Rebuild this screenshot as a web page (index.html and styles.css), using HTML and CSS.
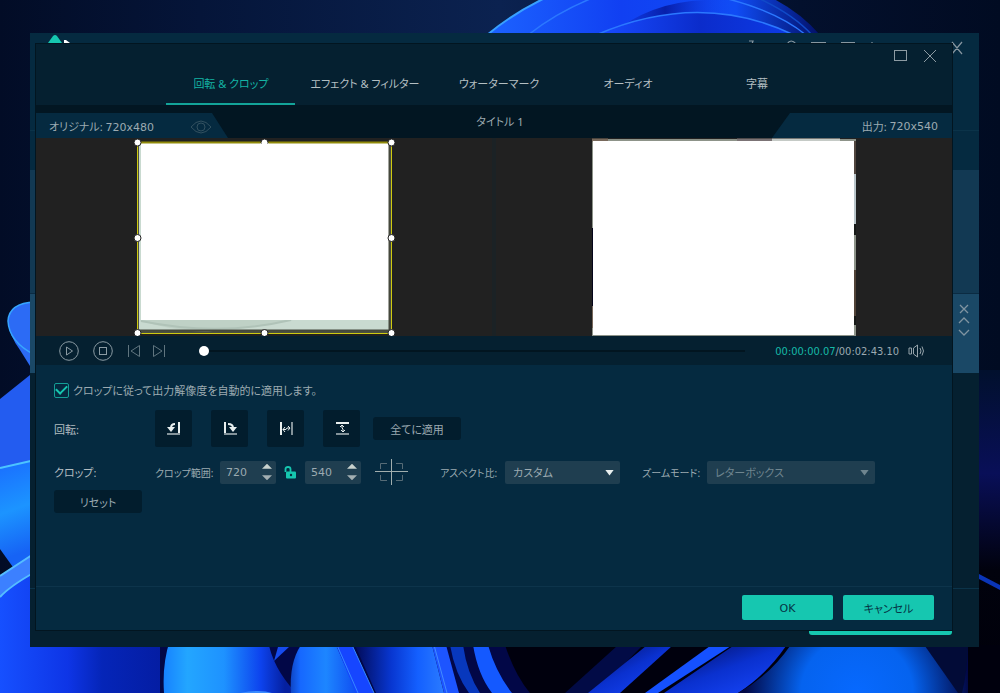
FILE: index.html
```html
<!DOCTYPE html>
<html lang="ja">
<head>
<meta charset="utf-8">
<meta name="viewport" content="width=device-width, initial-scale=1">
<title>回転 &amp; クロップ</title>
<link rel="stylesheet" href="styles.css">
</head>
<body>
<div class="desktop">
  <svg class="wallpaper" viewBox="0 0 1000 693" preserveAspectRatio="none" aria-hidden="true">
    <defs>
      <linearGradient id="sky" x1="0" x2="1" y1="0" y2="0">
        <stop offset="0" stop-color="#020c26"/><stop offset=".2" stop-color="#051539"/><stop offset=".5" stop-color="#0b2250"/><stop offset=".8" stop-color="#03102d"/><stop offset="1" stop-color="#010b22"/>
      </linearGradient>
      <linearGradient id="arc" x1="490" x2="818" y1="0" y2="0" gradientUnits="userSpaceOnUse">
        <stop offset="0" stop-color="#1c62ff"/><stop offset=".4" stop-color="#1140f2"/><stop offset=".75" stop-color="#104cf5"/><stop offset="1" stop-color="#03126b"/>
      </linearGradient>
      <linearGradient id="arcIn" x1="600" x2="800" y1="0" y2="0" gradientUnits="userSpaceOnUse">
        <stop offset="0" stop-color="#184bff"/><stop offset=".5" stop-color="#0b2ccb"/><stop offset="1" stop-color="#0d3ce8"/>
      </linearGradient>
      <linearGradient id="arcShade" x1="600" x2="730" y1="0" y2="0" gradientUnits="userSpaceOnUse">
        <stop offset="0" stop-color="#0d30d8" stop-opacity="0"/><stop offset=".5" stop-color="#071faa"/><stop offset="1" stop-color="#1140f2" stop-opacity="0"/>
      </linearGradient>
      <linearGradient id="base" x1="0" x2="170" y1="0" y2="0" gradientUnits="userSpaceOnUse">
        <stop offset="0" stop-color="#1650ff"/><stop offset=".4" stop-color="#0e35e6"/><stop offset=".6" stop-color="#0525b8"/><stop offset="1" stop-color="#041ca0"/>
      </linearGradient>
      <linearGradient id="blob" x1="163" x2="285" y1="0" y2="0" gradientUnits="userSpaceOnUse">
        <stop offset="0" stop-color="#1681ff"/><stop offset=".2" stop-color="#23a6ff"/><stop offset=".5" stop-color="#1e92ff"/><stop offset=".8" stop-color="#0d43ee"/><stop offset="1" stop-color="#0520a0"/>
      </linearGradient>
      <linearGradient id="blade" x1="275" x2="360" y1="0" y2="0" gradientUnits="userSpaceOnUse">
        <stop offset="0" stop-color="#02106a"/><stop offset=".3" stop-color="#1668ff"/><stop offset=".6" stop-color="#1d86ff"/><stop offset="1" stop-color="#0e47f0"/>
      </linearGradient>
      <linearGradient id="blade2" x1="355" x2="445" y1="0" y2="0" gradientUnits="userSpaceOnUse">
        <stop offset="0" stop-color="#020b58"/><stop offset=".4" stop-color="#0836d0"/><stop offset=".7" stop-color="#1460ff"/><stop offset="1" stop-color="#2b7cff"/>
      </linearGradient>
      <linearGradient id="streak" x1="0" x2="1" y1="0" y2="1">
        <stop offset="0" stop-color="#020b55"/><stop offset=".5" stop-color="#0a31cf"/><stop offset="1" stop-color="#1848ff"/>
      </linearGradient>
      <radialGradient id="glow" cx="857" cy="693" r="112" gradientUnits="userSpaceOnUse">
        <stop offset="0" stop-color="#0769ff"/><stop offset=".5" stop-color="#0563ef"/><stop offset="1" stop-color="#020846"/>
      </radialGradient>
      <linearGradient id="right" x1="0" x2="0" y1="370" y2="693" gradientUnits="userSpaceOnUse">
        <stop offset="0" stop-color="#01102d"/><stop offset=".32" stop-color="#090f58"/><stop offset=".62" stop-color="#01020d"/><stop offset="1" stop-color="#00000a"/>
      </linearGradient>
      <linearGradient id="cup" x1="0" x2="30" y1="468" y2="550" gradientUnits="userSpaceOnUse">
        <stop offset="0" stop-color="#1a72ff"/><stop offset=".5" stop-color="#1c94ff"/><stop offset="1" stop-color="#1663f5"/>
      </linearGradient>
    </defs>
    <rect width="1000" height="693" fill="url(#sky)"/>
    <path d="M487 35Q512 14 545-2H772Q800 12 820 35Z" fill="url(#arc)"/>
    <path d="M610 35Q650 2 705 0H740Q780 12 800 35Z" fill="url(#arcShade)"/>
    <path d="M596 35Q700-10 794 35Z" fill="url(#arcIn)"/>
    <g fill="none" stroke="#2b78ff" stroke-width="1.5">
      <path d="M487 35Q512 14 545-2" stroke="#38a0ff" stroke-width="2"/>
      <path d="M528 35Q556 13 590-1"/><path d="M596 35Q700-10 794 35"/>
      <path d="M728-1Q778 12 806 35"/><path d="M760-1Q794 15 812 35" stroke="#104ac8"/>
    </g>
    <path d="M979 370H1000V693H979Z" fill="url(#right)"/>
    <path d="M979 574L1000 585V590L979 579Z" fill="#0a35b8"/>
    <path d="M35 302Q9 303 8 321Q9 335 20 350L35 374Z" fill="#2c6bf5"/>
    <path d="M35 302Q9 303 8 321Q9 342 35 355" fill="none" stroke="#36a5ff" stroke-width="1.5"/>
    <path d="M0 399L35 371V470H0Z" fill="#235cf0"/>
    <path d="M0 468L35 460V570H15L0 549Z" fill="url(#cup)"/>
    <path d="M0 468L35 460" stroke="#4cc4ff" stroke-width="2"/>
    <path d="M0 576L35 553V600H0Z" fill="#3c80ff"/>
    <path d="M0 597Q10 586 35 572V647H170V693H0Z" fill="url(#base)"/>
    <path d="M0 576L35 553M0 597Q10 586 35 572" fill="none" stroke="#55bdff" stroke-width="2"/>
    <path d="M160 640H560V693H160Z" fill="#020747"/>
    <path d="M170 640H268Q272 667 296 693H164Q162 664 170 640Z" fill="url(#blob)"/>
    <path d="M240 693Q260 689 272 693Z" fill="#398bff"/>
    <path d="M290 646L274 661L278 647Z" fill="#164bee"/>
    <path d="M301 645H336L357 693H291Q289 663 301 645Z" fill="url(#blade)"/>
    <path d="M336 645H352L374 693H356Z" fill="#1646ff"/><path d="M337 645L358 693M352 645L374 693" stroke="#358aff" fill="none"/>
    <path d="M355 645H432L444 693H376Z" fill="url(#blade2)"/>
    <path d="M432 645H446L459 693H444Z" fill="#1d55ff"/><path d="M434 645L447 693" stroke="#438cff"/>
    <path d="M450 645H463Q467 673 480 693H469Q455 674 450 645Z" fill="#0838bd"/>
    <path d="M473 645H488Q496 673 512 693H492Q478 675 473 645Z" fill="#1459ff"/>
    <path d="M505 645H1000V693H530Q515 675 505 645Z" fill="#00000d"/>
    <path d="M617 646H642L596 693H565Z" fill="#020b46"/>
    <path d="M646 646H672L620 693H588Z" fill="url(#streak)"/>
    <path d="M710 646H731L658 693H645Z" fill="#1551ff"/>
    <path d="M733 646H786Q766 675 738 693H664Z" fill="url(#streak)"/>
    <path d="M790 646H968V693H738Q770 675 790 646Z" fill="url(#glow)"/>
    <path d="M925 646H968Q967 673 962 693H958Z" fill="#020b37"/>
  </svg>

  <section class="app" aria-label="メイン">
    <div class="app-bar">
      <svg class="app-logo" viewBox="0 0 24 12" aria-hidden="true"><path d="M0 10L5 3Q7 1 9 3L14 10Z" fill="#16c7b0"/><path d="M16 7H18L22 10H16Z" fill="#fff"/></svg>
      <svg class="app-tools" viewBox="0 0 216 24" fill="none" stroke="#8796a0" aria-hidden="true">
        <path d="M1 8H5L4 11M39 11Q43 5 48 11M63 9.500H78M93 9.500H107M124 9V12M204 9L214 21M214 9L204 21" stroke-width="1.200"/>
      </svg>
    </div>
    <div class="app-menu"></div>
    <div class="app-row"></div>
    <div class="app-row app-row-active">
      <div class="row-tools">
        <svg viewBox="0 0 12 34" fill="none" stroke="#8094a1" stroke-width="1.300" aria-hidden="true"><path d="M2 1L10 9M10 1L2 9M1 19L6 14L11 19M1 26L6 31L11 26"/></svg>
      </div>
    </div>
    <div class="app-list"></div>
    <div class="app-foot"><div class="app-convert"></div></div>

    <main class="dialog" role="dialog" aria-label="回転 &amp; クロップ">
      <header class="dialog-head">
        <div class="window-buttons">
          <button type="button" aria-label="最大化"><svg viewBox="0 0 14 14"><rect x="1.500" y="1.500" width="12" height="10"/></svg></button>
          <button type="button" aria-label="閉じる"><svg viewBox="0 0 14 14"><path d="M1 1L13 13M13 1L1 13"/></svg></button>
        </div>
        <nav class="tabs" role="tablist">
          <button class="tab active" type="button" role="tab" aria-selected="true">回転 &amp; クロップ</button>
          <button class="tab" type="button" role="tab">エフェクト &amp; フィルター</button>
          <button class="tab" type="button" role="tab">ウォーターマーク</button>
          <button class="tab" type="button" role="tab">オーディオ</button>
          <button class="tab" type="button" role="tab">字幕</button>
        </nav>
      </header>

      <div class="preview-head">
        <div class="size-tag source">
          <span>オリジナル: <span class="num">720x480</span></span>
          <button class="eye" type="button" aria-label="プレビュー"><svg viewBox="0 0 22 14"><path d="M1 7Q6 1 11 1T21 7Q16 13 11 13T1 7Z"/><circle cx="11" cy="7" r="4"/></svg></button>
        </div>
        <h1 class="clip-title">タイトル 1</h1>
        <div class="size-tag output">出力: <span class="num">720x540</span></div>
      </div>

      <div class="previews">
        <div class="preview">
          <svg class="source-frame" viewBox="0 0 262 198" aria-hidden="true">
            <rect x="4" y="4" width="254" height="191" fill="#4c5040"/>
            <rect x="6" y="6" width="250" height="187" fill="#c9dad0"/>
            <path d="M6 182Q45 195 80 193Q125 190 160 182Z" fill="#bfd1c6"/>
            <path d="M8 183Q85 199 158 182" fill="none" stroke="#b0c3b8" stroke-width="2"/>
            <rect x="8" y="5" width="248" height="177" fill="#fff"/>
            <path d="M256.500 5V194M6 192.500H256" stroke="#45483c" stroke-width="2"/>
            <path d="M4 4.500H258" stroke="#918b0a" stroke-width="2"/>
            <path d="M4.500 4V195.500H258.500V4" fill="none" stroke="#cfcb10"/>
            <g fill="#fff" stroke="#222" stroke-width="1">
              <circle cx="4.500" cy="4.500" r="3.500"/><circle cx="131.500" cy="4.500" r="3.500"/><circle cx="258.500" cy="4.500" r="3.500"/>
              <circle cx="4.500" cy="100" r="3.500"/><circle cx="258.500" cy="100" r="3.500"/>
              <circle cx="4.500" cy="195" r="3.500"/><circle cx="131.500" cy="195" r="3.500"/><circle cx="258.500" cy="195" r="3.500"/>
            </g>
            <path d="M127 5.500H136V9H127Z" fill="#fff"/>
          </svg>
        </div>
        <div class="preview">
          <svg class="output-frame" viewBox="0 0 264 198" aria-hidden="true">
            <rect y="1" width="264" height="197" fill="#8d9389"/>
            <path d="M0 90H2V168H0Z" fill="#05051a"/><path d="M0 190V168M0 2H16" stroke="#77685b" stroke-width="3"/>
            <path d="M180 2H248" stroke="#c5cac6" stroke-width="3"/><path d="M145 2H180" stroke="#7b7375" stroke-width="3"/>
            <path d="M263 3V36" stroke="#51463f" stroke-width="3"/><path d="M263 36V86" stroke="#b9c5ca" stroke-width="3"/><path d="M263 86V97M263 178V187" stroke="#171a18" stroke-width="3"/><path d="M263 132V178" stroke="#514338" stroke-width="3"/>
            <rect x="1" y="3" width="261" height="194" fill="#fff"/>
          </svg>
        </div>
      </div>

      <div class="player">
        <button type="button" aria-label="再生"><svg class="round" viewBox="0 0 20 20"><circle cx="10" cy="10" r="9.300"/><path d="M7.500 6L13.500 10L7.500 14Z"/></svg></button>
        <button type="button" aria-label="停止"><svg class="round" viewBox="0 0 20 20"><circle cx="10" cy="10" r="9.300"/><rect x="6.500" y="6.500" width="7" height="7"/></svg></button>
        <button class="skip" type="button" aria-label="前へ"><svg viewBox="0 0 14 14"><path d="M1.500 1V13M12.500 1.500L4 7L12.500 12.500Z"/></svg></button>
        <button class="skip" type="button" aria-label="次へ"><svg viewBox="0 0 14 14"><path d="M12.500 1V13M1.500 1.500L10 7L1.500 12.500Z"/></svg></button>
        <input class="seek" type="range" min="0" max="100" value="0" aria-label="再生位置">
        <div class="time"><span class="now">00:00:00.07</span>/00:02:43.10</div>
        <button class="volume" type="button" aria-label="音量"><svg viewBox="0 0 18 14"><path d="M1 4H3.500V10H1ZM5.500 4L9.500 1V13L5.500 10ZM12 4Q14 7 12 10M14 2.500Q17 7 14 11.500"/></svg></button>
      </div>

      <form class="settings">
        <label class="auto-apply"><input type="checkbox" checked><span>クロップに従って出力解像度を自動的に適用します。</span></label>
        <div class="setting-row rotate-row">
          <span class="setting-name">回転:</span>
          <div class="rotate-buttons">
            <button type="button" aria-label="左に回転"><svg viewBox="0 0 16 16"><path class="dim" d="M1 13H14"/><path class="thick" d="M13 1V12"/><path class="curve" d="M9 3Q5 3 5 7"/><path class="solid" d="M1 6H9L5 11Z"/></svg></button>
            <button type="button" aria-label="右に回転"><svg viewBox="0 0 16 16"><path class="dim" d="M2 13H15"/><path class="thick" d="M3 1V12"/><path class="curve" d="M6 3Q11 3 11 7"/><path class="solid" d="M7 6H15L11 11Z"/></svg></button>
            <button type="button" aria-label="左右反転"><svg viewBox="0 0 16 16"><path class="thick" d="M3 1V14"/><path class="dim" d="M14 1V14"/><path d="M5 8.500H8L9 7H12M7 6L5 8.500L7 11M10 5L12 7L10 9.500"/></svg></button>
            <button type="button" aria-label="上下反転"><svg viewBox="0 0 16 16"><path class="thick" d="M2 2H15"/><path class="dim" d="M2 13H15"/><path d="M8 4V7L9 8V11M6 6L8 4L10 6M7 9L9 11L11 9"/></svg></button>
          </div>
          <button class="dark-button" type="button">全てに適用</button>
        </div>
        <div class="setting-row crop-row">
          <span class="setting-name">クロップ:</span>
          <label class="field-label" for="crop-w">クロップ範囲:</label>
          <div class="stepper"><input id="crop-w" type="text" inputmode="numeric" value="720"><div class="steps"><button class="up" type="button" aria-label="幅を増やす"></button><button class="down" type="button" aria-label="幅を減らす"></button></div></div>
          <button class="lock" type="button" aria-label="比率の固定"><svg viewBox="0 0 12 13"><path d="M1.500 6V3Q1.500 1 4 1T6.500 3V6" fill="none" stroke="#16c7b0" stroke-width="1.800"/><rect x="2" y="5.500" width="10" height="7" rx="1" fill="#16c7b0"/><circle cx="7" cy="9" r="1.200" fill="#05303f"/></svg></button>
          <div class="stepper"><input id="crop-h" type="text" inputmode="numeric" value="540" aria-label="高さ"><div class="steps"><button class="up" type="button" aria-label="高さを増やす"></button><button class="down" type="button" aria-label="高さを減らす"></button></div></div>
          <button class="center" type="button" aria-label="中央に配置"><svg viewBox="0 0 33 28"><path d="M5.500 11V5.500H12M21 5.500H27.500V11M27.500 17V22.500H21M12 22.500H5.500V17" stroke="#566b76"/><path d="M0 13.500H33M16.500 1V27" stroke="#a1aeae"/></svg></button>
          <label class="field-label" for="aspect">アスペクト比:</label>
          <div class="select aspect"><select id="aspect"><option>カスタム</option></select></div>
          <label class="field-label" for="zoom">ズームモード:</label>
          <div class="select zoom"><select id="zoom" disabled><option>レターボックス</option></select></div>
        </div>
        <button class="dark-button reset" type="button">リセット</button>
      </form>

      <footer class="dialog-foot">
        <button class="primary ok" type="button">OK</button>
        <button class="primary" type="button">キャンセル</button>
      </footer>
    </main>
  </section>
</div>
</body>
</html>
```

FILE: styles.css
```css
* { box-sizing: border-box; }

body {
  margin: 0;
  color: #9caab1;
  font: 11px/16px "Noto Sans", "Noto Sans CJK JP", sans-serif;
  font-feature-settings: "palt";
}

button, input, select {
  margin: 0;
  padding: 0;
  border: 0;
  background: none;
  color: inherit;
  font: inherit;
  font-feature-settings: inherit;
}

svg { display: block; }

.desktop {
  position: relative;
  display: flex;
  min-height: 100vh;
  padding: 33px 21px 46px 30px;
  overflow: hidden;
}

.wallpaper {
  position: absolute;
  inset: 0;
  width: 100%;
  height: 100%;
}

/* Main application window behind the dialog */
.app {
  position: relative;
  display: flex;
  flex: 1;
  flex-direction: column;
  background: #052030;
}

.app-bar {
  display: flex;
  justify-content: space-between;
  height: 98px;
  padding: 0 15px 0 18px;
  border-bottom: 1px solid #0b3349;
  background: #052a40;
}

.app-logo { width: 24px; height: 12px; }
.app-tools { width: 216px; height: 24px; }
.app-menu { height: 39px; background: #052a40; }
.app-row { height: 123px; background: #123953; }
.app-row-active {
  height: 80px;
  border-top: 1px solid #0b2b42;
  background: #1a4866;
}
.row-tools {
  display: flex;
  justify-content: flex-end;
  padding: 10px 9px 0 0;
}
.row-tools svg { width: 12px; height: 34px; }
.app-list { flex: 1; }
.app-foot {
  display: flex;
  justify-content: flex-end;
  height: 59px;
  padding: 12px 27px;
  border-top: 1px solid #0b3349;
}
.app-convert {
  width: 143px;
  border-radius: 3px;
  background: #16c7b0;
}

/* Edit dialog lies over the application window */
.dialog {
  position: absolute;
  inset: 10px 26px 16px 5px;
  display: flex;
  flex-direction: column;
  border: 1px solid #021520;
  background: #052a40;
}

.dialog-head { background: #052030; }

.window-buttons {
  display: flex;
  justify-content: flex-end;
  gap: 16px;
  height: 20px;
  padding: 3px 15px 0 0;
}
.window-buttons svg {
  width: 14px;
  height: 14px;
  fill: none;
  stroke: #8d9ba3;
}

.tabs { display: flex; justify-content: center; }
.tab {
  min-width: 129px;
  height: 41px;
  padding: 1px 15px 0;
  border-bottom: 2px solid transparent;
  color: #b4bfc2;
}
.tab.active { border-color: #13a499; color: #14b3a4; }

.preview-head {
  display: flex;
  align-items: stretch;
  justify-content: space-between;
  height: 33px;
  padding-top: 8px;
  background: #021622;
}
.size-tag {
  display: flex;
  align-items: center;
  background: #052a40;
  white-space: pre;
}
.source {
  justify-content: space-between;
  width: 192px;
  padding: 3px 16px 0 13px;
  clip-path: polygon(0 0, 176px 0, 100% 100%, 0 100%);
}
.output {
  justify-content: flex-end;
  width: 180px;
  padding: 3px 14px 0 0;
  clip-path: polygon(18px 0, 100% 0, 100% 100%, 0 100%);
}
.num { font-family: "DejaVu Sans", sans-serif; }
.eye svg {
  width: 22px;
  height: 14px;
  fill: none;
  stroke: #335160;
}
.clip-title {
  margin: 0;
  padding-top: 1px;
  font-size: 11px;
  font-weight: 400;
}

.previews {
  display: flex;
  gap: 4px;
  height: 198px;
  background: #1b2225;
}
.preview {
  display: flex;
  flex: 1;
  justify-content: center;
  background: #212121;
}
.source-frame { width: 262px; height: 198px; }
.output-frame { width: 264px; height: 198px; }

.player {
  display: flex;
  align-items: center;
  height: 29px;
  padding: 0 26px 0 23px;
  background: #052030;
}
.player svg {
  width: 14px;
  height: 14px;
  fill: none;
  stroke: #60757f;
}
.player .round {
  width: 20px;
  height: 20px;
  margin-right: 14px;
  stroke: #8b9ba3;
}
.skip + .skip { margin-left: 11px; }
.seek {
  flex: 1;
  height: 12px;
  margin: 0 30px 0 33px;
  appearance: none;
}
.seek::-webkit-slider-runnable-track {
  height: 2px;
  background: #021520;
}
.seek::-webkit-slider-thumb {
  width: 10px;
  height: 10px;
  margin-top: -4px;
  border-radius: 50%;
  background: #fff;
  appearance: none;
}
.time {
  padding-top: 2px;
  font-family: "DejaVu Sans Condensed", "Noto Sans", sans-serif;
}
.now { color: #16b9a8; }
.player .volume svg { width: 18px; margin-left: 9px; stroke: #95a3aa; }

.settings {
  flex: 1;
  padding: 16px 18px 0;
}
.auto-apply {
  display: flex;
  align-items: center;
  gap: 4px;
  height: 18px;
}
.auto-apply span { padding-top: 2px; }
.auto-apply input {
  display: grid;
  place-items: center;
  width: 15px;
  height: 15px;
  border: 1px solid #149e96;
  border-radius: 2px;
  appearance: none;
}
.auto-apply input:checked::before {
  width: 9px;
  height: 5px;
  margin-bottom: 3px;
  border: solid #16c7b0;
  border-width: 0 0 2px 2px;
  content: "";
  rotate: -45deg;
}

.setting-row { display: flex; align-items: center; white-space: nowrap; }
.rotate-row { margin-top: 11px; }
.crop-row { margin-top: 11px; }
.setting-name {
  flex-shrink: 0;
  width: 101px;
  padding-top: 2px;
  color: #b2bcc0;
}

.rotate-buttons { display: flex; gap: 19px; margin-right: 13px; }
.rotate-buttons button {
  display: grid;
  place-items: center;
  width: 37px;
  height: 37px;
  border-radius: 2px;
  background: #021d2d;
}
.rotate-buttons svg {
  width: 16px;
  height: 16px;
  fill: none;
  stroke: #e8efef;
}
.rotate-buttons .thick,
.rotate-buttons .curve { stroke-width: 2; }
.rotate-buttons .dim { stroke: #84939a; stroke-width: 2; }
.rotate-buttons .solid { fill: #e8efef; stroke: none; }

.dark-button {
  width: 88px;
  height: 23px;
  padding-top: 2px;
  border-radius: 3px;
  background: #021d2d;
}
.reset { display: block; margin-top: 4px; }

.field-label {
  width: 65px;
  padding-top: 2px;
  font-size: 10px;
}
.stepper {
  display: flex;
  justify-content: space-between;
  width: 56px;
  height: 23px;
  padding: 0 4px 0 6px;
  border-radius: 2px;
  background: #1f3e50;
}
.stepper input {
  width: 30px;
  padding-top: 2px;
  font-family: "DejaVu Sans", sans-serif;
}
.steps { display: flex; flex-direction: column; }
.steps button {
  display: grid;
  flex: 1;
  place-items: center;
  width: 10px;
}
.steps button::before {
  width: 10px;
  height: 5px;
  background: #c9d2ce;
  content: "";
}
.steps .up::before { clip-path: polygon(50% 0, 100% 100%, 0 100%); }
.steps .down::before {
  background: #a3afb2;
  clip-path: polygon(0 0, 100% 0, 50% 100%);
}
.lock { margin: 0 9px 0 8px; }
.lock svg { width: 12px; height: 13px; }
.center { margin: 0 32px 0 14px; }
.center svg { width: 33px; height: 28px; fill: none; }

.select {
  position: relative;
  height: 23px;
  border-radius: 2px;
  background: #1f3e50;
}
.select select {
  width: 100%;
  height: 23px;
  padding: 2px 24px 0 8px;
  appearance: none;
  opacity: 1;
}
.select::after {
  position: absolute;
  top: 9px;
  right: 6px;
  width: 9px;
  height: 6px;
  background: #e9efef;
  clip-path: polygon(0 0, 100% 0, 50% 100%);
  content: "";
  pointer-events: none;
}
.aspect { width: 115px; margin-right: 22px; }
.zoom { width: 168px; }
.zoom select { color: #6f858f; }
.zoom::after { background: #6f858f; }

.dialog-foot {
  display: flex;
  justify-content: flex-end;
  gap: 10px;
  padding: 8px 18px 10px;
  border-top: 1px solid #0d344b;
}
.primary {
  width: 91px;
  height: 25px;
  padding-top: 2px;
  border-radius: 2px;
  background: #16c7b0;
  color: #053445;
}
.ok { font-family: "DejaVu Sans", sans-serif; }
```
